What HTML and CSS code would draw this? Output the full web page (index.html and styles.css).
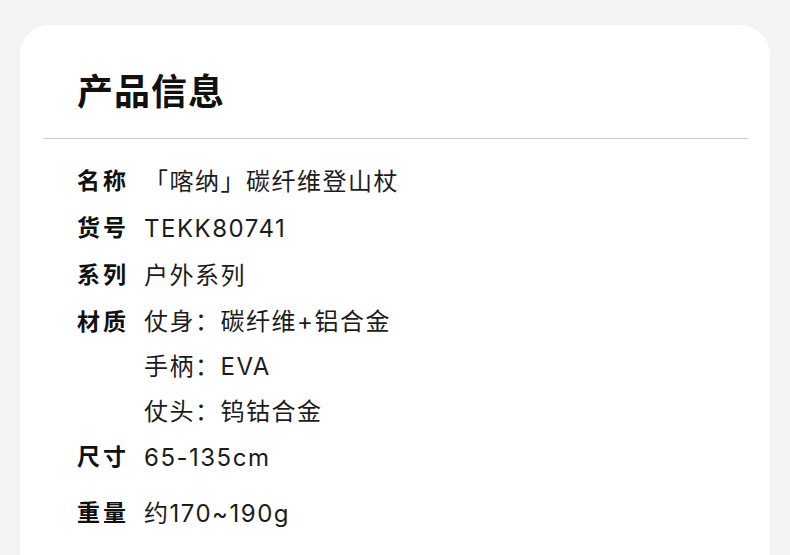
FILE: index.html
```html
<!DOCTYPE html>
<html lang="zh-CN">
<head>
<meta charset="utf-8">
<title>产品信息</title>
<link rel="stylesheet" href="styles.css">
</head>
<body>
<div class="card">
  <h1 class="title">产品信息</h1>
  <hr class="divider">
  <div class="rows">
    <div class="row"><span class="label">名称</span><span class="value">「喀纳」碳纤维登山杖</span></div>
    <div class="row"><span class="label">货号</span><span class="value">TEKK80741</span></div>
    <div class="row"><span class="label">系列</span><span class="value">户外系列</span></div>
    <div class="row"><span class="label">材质</span>
      <div class="value multi">
        <div>仗身：碳纤维+铝合金</div>
        <div>手柄：EVA</div>
        <div>仗头：钨钴合金</div>
      </div>
    </div>
    <div class="row"><span class="label">尺寸</span><span class="value">65-135cm</span></div>
    <div class="row last"><span class="label">重量</span><span class="value">约170~190g</span></div>
  </div>
</div>
</body>
</html>
```

FILE: styles.css
```css
html, body {
  margin: 0;
  padding: 0;
  background: #f3f3f3;
  height: 100%;
  overflow: hidden;
}
body {
  font-family: Inter, "Noto Sans CJK SC", sans-serif;
  color: #1c1c1c;
}
.card {
  margin: 25px 20px 0;
  background: #ffffff;
  border-radius: 30px 30px 0 0;
  padding: 39px 22px 40px 23px;
  min-height: 600px;
}
.title {
  margin: 0 0 0 34px;
  font-family: "Noto Sans CJK SC", sans-serif;
  font-size: 36px;
  font-weight: 700;
  line-height: 50px;
  letter-spacing: 1px;
  color: #111;
}
.divider {
  margin: 24px 0 0;
  border: 0;
  border-top: 1px solid #cccccc;
  height: 0;
}
.rows {
  margin: 19px 0 0 34px;
  display: flex;
  flex-direction: column;
}
.row {
  display: flex;
  align-items: flex-start;
  font-size: 24px;
  line-height: 47px;
}
.row.last {
  margin-top: 9px;
}
.label {
  font-family: "Noto Sans CJK SC", sans-serif;
  font-size: 23px;
  font-weight: 700;
  letter-spacing: 3px;
  line-height: 43px;
  width: 52px;
  margin-right: 15px;
  color: #111;
}
.value {
  letter-spacing: 1.5px;
}
.multi {
  display: flex;
  flex-direction: column;
  line-height: 45px;
}
```
